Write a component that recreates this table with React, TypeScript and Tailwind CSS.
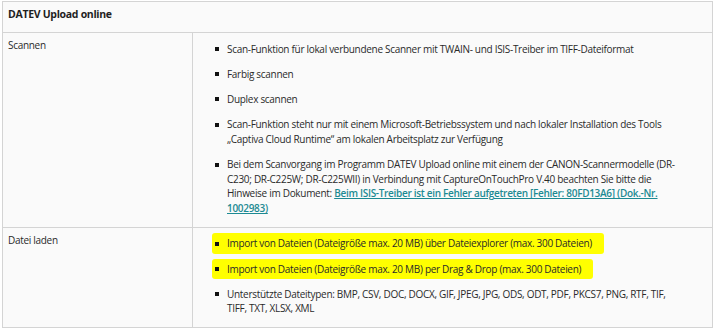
import { ReactNode } from 'react';

const Bullet = () => <span className="mt-[5.5px] h-[4px] w-[4px] shrink-0 bg-[#111]" />;

const Item = ({ children, marked = false }: { children: ReactNode; marked?: boolean }) => (
  <li className="flex">
    {marked ? (
      <span className="relative flex gap-[8px]">
        <span className="absolute -bottom-[3px] -left-[3px] -right-[12px] -top-[3px] -z-10 rounded-[3px] bg-[#ffff00]" />
        <Bullet />
        <span>{children}</span>
      </span>
    ) : (
      <span className="flex gap-[8px]">
        <Bullet />
        <span>{children}</span>
      </span>
    )}
  </li>
);

const Row = ({ label, children }: { label: string; children: ReactNode }) => (
  <div className="grid grid-cols-[190px_1fr] border-b border-[#d4d4d4] last:border-b-0">
    <div className="border-r border-[#d4d4d4] px-[5px] pt-[5px]">{label}</div>
    <ul className="isolate flex flex-col gap-[10.5px] pb-[11px] pl-[22px] pr-[8px] pt-[8.5px]">{children}</ul>
  </div>
);

const App = () => (
  <div
    className="min-h-[330px] bg-white pl-[2px] pt-[1px] text-[10px] leading-[14.7px] tracking-[-0.3px] text-[#2a2a2a]"
    style={{ fontFamily: '"Open Sans", "Noto Sans", sans-serif' }}
  >
    <div className="w-[711px] border border-[#d4d4d4] bg-[#fafafa]">
      <div className="h-[31px] border-b border-[#d4d4d4] px-[5px] pt-[5px] text-[10.5px] font-bold text-[#1f1f1f]">
        DATEV Upload online
      </div>
      <Row label="Scannen">
        <Item>Scan-Funktion für lokal verbundene Scanner mit TWAIN- und ISIS-Treiber im TIFF-Dateiformat</Item>
        <Item>Farbig scannen</Item>
        <Item>Duplex scannen</Item>
        <Item>
          Scan-Funktion steht nur mit einem Microsoft-Betriebssystem und nach lokaler Installation des Tools
          <br />
          „Captiva Cloud Runtime“ am lokalen Arbeitsplatz zur Verfügung
        </Item>
        <Item>
          Bei dem Scanvorgang im Programm DATEV Upload online mit einem der CANON-Scannermodelle (DR-
          <br />
          C230; DR-C225W; DR-C225WII) in Verbindung mit CaptureOnTouchPro V.40 beachten Sie bitte die
          <br />
          Hinweise im Dokument:{' '}
          <a href="#" className="font-semibold text-[#1c8a93] underline">
            Beim ISIS-Treiber ist ein Fehler aufgetreten [Fehler: 80FD13A6] (Dok.-Nr.
            <br />
            1002983)
          </a>
        </Item>
      </Row>
      <Row label="Datei laden">
        <Item marked>Import von Dateien (Dateigröße max. 20 MB) über Dateiexplorer (max. 300 Dateien)</Item>
        <Item marked>Import von Dateien (Dateigröße max. 20 MB) per Drag &amp; Drop (max. 300 Dateien)</Item>
        <Item>
          Unterstützte Dateitypen: BMP, CSV, DOC, DOCX, GIF, JPEG, JPG, ODS, ODT, PDF, PKCS7, PNG, RTF, TIF,
          <br />
          TIFF, TXT, XLSX, XML
        </Item>
      </Row>
    </div>
  </div>
);

export default App;
